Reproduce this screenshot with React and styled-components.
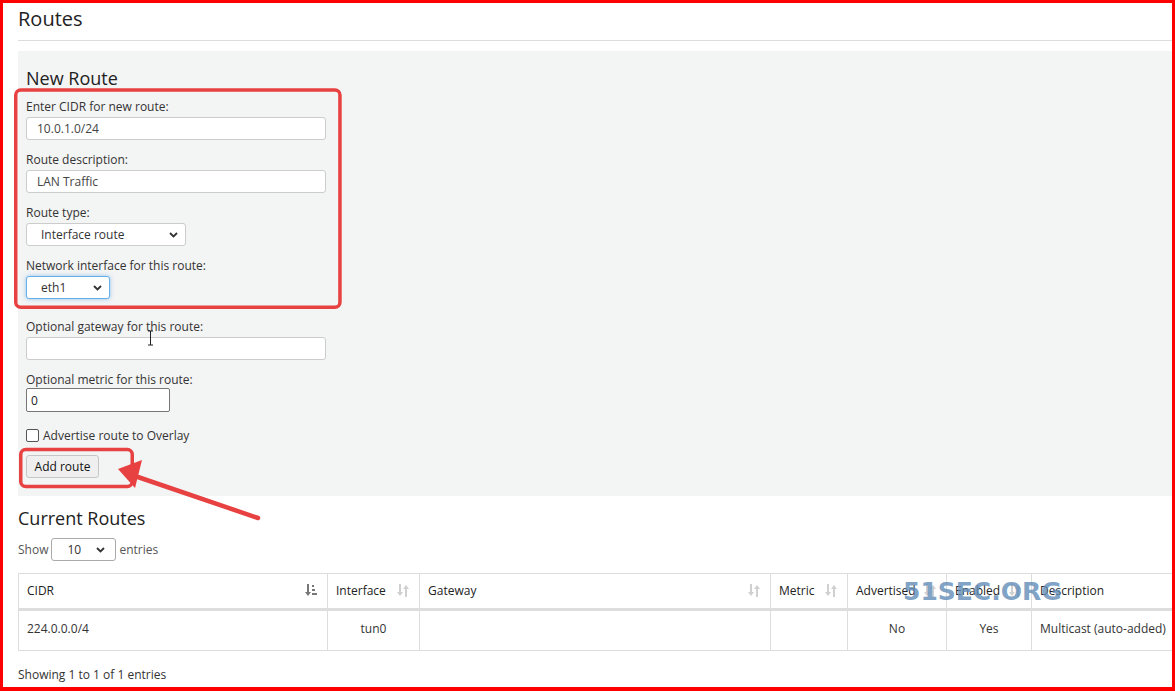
import React from 'react';
import styled, { createGlobalStyle } from 'styled-components';

const Global = createGlobalStyle`
  html, body { margin: 0; padding: 0; background: #fff; }
  body {
    font-family: "Open Sans", "Noto Sans", sans-serif;
    font-size: 12px;
    color: #333;
  }
  * { box-sizing: border-box; }
`;

const Frame = styled.div`
  position: relative;
  width: 1175px;
  height: 691px;
  border: 3px solid #ff0000;
  border-bottom-width: 4px;
  overflow: hidden;
  background: #fff;
`;

const Page = styled.div`
  width: 1220px;
  padding-left: 15px;
`;

const Title = styled.h1`
  margin: 0;
  padding-top: 2px;
  font-size: 20px;
  line-height: 28px;
  font-weight: 400;
  color: #222;
`;

const Rule = styled.hr`
  margin: 7px 0 10px;
  border: 0;
  border-top: 1px solid #ddd;
`;

const Panel = styled.section`
  background: #f3f4f4;
  padding: 15px 8px 18px;
`;

const SectionTitle = styled.h3`
  margin: ${p => p.$mt || 0}px 0 ${p => p.$mb || 0}px;
  font-size: 18px;
  line-height: 24px;
  font-weight: 400;
  color: #222;
`;

const Group = styled.div`
  display: flex;
  flex-direction: column;
  align-items: flex-start;
  margin-bottom: ${p => p.$mb ?? 11}px;
`;

const Label = styled.label`
  line-height: 17px;
  margin-bottom: ${p => p.$mb ?? 2}px;
`;

const TextInput = styled.div`
  width: ${p => p.$w || 300}px;
  height: 23px;
  display: flex;
  align-items: center;
  padding: 0 10px;
  background: #fff;
  border: 1px solid #ccc;
  border-radius: 3px;
  color: #444;
`;

const PlainInput = styled.div`
  width: 144px;
  height: 24px;
  display: flex;
  align-items: center;
  padding: 0 4px;
  background: #fff;
  border: 1px solid #767676;
  border-radius: 2px;
  color: #222;
`;

const Select = styled.div`
  width: ${p => p.$w}px;
  height: 23px;
  display: flex;
  align-items: center;
  justify-content: space-between;
  padding: 0 ${p => p.$pr || 7}px 0 ${p => p.$pl || 14}px;
  background: #fff;
  border: 1px solid ${p => (p.$focus ? '#66afe9' : p.$border || '#ccc')};
  border-radius: 3px;
  box-shadow: ${p => (p.$focus ? '0 0 4px rgba(102,175,233,0.7)' : 'none')};
  color: #333;
`;

const CheckRow = styled.div`
  display: flex;
  align-items: center;
  gap: 4px;
  line-height: 17px;
  margin-bottom: 11px;
`;

const Box = styled.span`
  width: 13px;
  height: 13px;
  border: 1px solid #555;
  border-radius: 2px;
  background: #fff;
`;

const Button = styled.button`
  height: 23px;
  width: 73px;
  padding: 0;
  font: inherit;
  color: #111;
  background: #efefef;
  border: 1px solid #c6c6c6;
  border-radius: 3px;
`;

const LengthRow = styled.div`
  display: flex;
  align-items: center;
  gap: 3px;
  margin-top: 8px;
  color: #555;
`;

const Grid = styled.div`
  margin-top: 12px;
  display: grid;
  grid-template-columns: 309px 92px 351px 77px 99px 85px 180px;
  border-top: 1px solid #ddd;
  border-left: 1px solid #ddd;
  width: max-content;
`;

const Th = styled.div`
  height: 37px;
  display: flex;
  align-items: center;
  justify-content: space-between;
  padding: 1px 10px 2px 8px;
  border-right: 1px solid #ddd;
  border-bottom: 3px solid #ddd;
  font-weight: 500;
  color: #222;
  white-space: nowrap;
`;

const Td = styled.div`
  height: 40px;
  padding: 9px 8px 0;
  line-height: 18px;
  border-right: 1px solid #ddd;
  border-bottom: 1px solid #ddd;
  text-align: ${p => (p.$center ? 'center' : 'left')};
  white-space: nowrap;
  color: #333;
`;

const Info = styled.div`
  margin-top: 15px;
  line-height: 17px;
`;

const Overlay = styled.svg`
  position: absolute;
  left: -3px;
  top: -3px;
  width: 1175px;
  height: 691px;
  pointer-events: none;
`;

const Watermark = styled.div`
  position: absolute;
  left: 900px;
  top: 574px;
  font-family: "DejaVu Sans", sans-serif;
  font-weight: 700;
  font-size: 25px;
  color: rgba(100, 142, 184, 0.82);
  pointer-events: none;
`;

const Chevron = () => (
  <svg width="9" height="6" viewBox="0 0 9 6">
    <polyline points="1,1 4.5,4.5 8,1" fill="none" stroke="#333" strokeWidth="1.8" />
  </svg>
);

const SortBoth = () => (
  <svg width="12" height="13" viewBox="0 0 12 13">
    <g fill="#d0d0d0">
      <rect x="2" y="0" width="2" height="9" />
      <polygon points="0,8 6,8 3,12" />
      <rect x="8" y="4" width="2" height="9" />
      <polygon points="6,5 12,5 9,1" />
    </g>
  </svg>
);

const SortDown = () => (
  <svg width="12" height="13" viewBox="0 0 12 13">
    <g fill="#777">
      <rect x="2" y="0" width="2" height="9" />
      <polygon points="0,8 6,8 3,12" />
      <rect x="7" y="1" width="2" height="2" />
      <rect x="7" y="5" width="3" height="2" />
      <rect x="7" y="9" width="5" height="2" />
    </g>
  </svg>
);

const columns = [
  { name: 'CIDR', icon: <SortDown /> },
  { name: 'Interface', icon: <SortBoth /> },
  { name: 'Gateway', icon: <SortBoth /> },
  { name: 'Metric', icon: <SortBoth /> },
  { name: 'Advertised', icon: <SortBoth /> },
  { name: 'Enabled', icon: <SortBoth /> },
  { name: 'Description', icon: null },
];

const row = [
  { v: '224.0.0.0/4' },
  { v: 'tun0', c: true },
  { v: '' },
  { v: '' },
  { v: 'No', c: true },
  { v: 'Yes', c: true },
  { v: 'Multicast (auto-added)' },
];

export default function App() {
  return (
    <>
      <Global />
      <Frame>
        <Page>
          <Title>Routes</Title>
          <Rule />
          <Panel>
            <SectionTitle $mb={8}>New Route</SectionTitle>
            <Group>
              <Label>Enter CIDR for new route:</Label>
              <TextInput>10.0.1.0/24</TextInput>
            </Group>
            <Group>
              <Label>Route description:</Label>
              <TextInput>LAN Traffic</TextInput>
            </Group>
            <Group>
              <Label>Route type:</Label>
              <Select $w={160}>
                <span>Interface route</span>
                <Chevron />
              </Select>
            </Group>
            <Group $mb={19}>
              <Label>Network interface for this route:</Label>
              <Select $w={84} $focus>
                <span>eth1</span>
                <Chevron />
              </Select>
            </Group>
            <Group>
              <Label>Optional gateway for this route:</Label>
              <TextInput />
            </Group>
            <Group $mb={15}>
              <Label $mb={0}>Optional metric for this route:</Label>
              <PlainInput>0</PlainInput>
            </Group>
            <CheckRow>
              <Box />
              <span>Advertise route to Overlay</span>
            </CheckRow>
            <Button>Add route</Button>
          </Panel>
          <SectionTitle $mt={10}>Current Routes</SectionTitle>
          <LengthRow>
            <span>Show</span>
            <Select $w={65} $pl={15} $pr={10} $border="#aaa">
              <span>10</span>
              <Chevron />
            </Select>
            <span>entries</span>
          </LengthRow>
          <Grid>
            {columns.map(c => (
              <Th key={c.name}>
                <span>{c.name}</span>
                {c.icon}
              </Th>
            ))}
            {row.map((r, i) => (
              <Td key={i} $center={r.c}>{r.v}</Td>
            ))}
          </Grid>
          <Info>Showing 1 to 1 of 1 entries</Info>
        </Page>
        <Watermark>51SEC.ORG</Watermark>
        <Overlay viewBox="0 0 1175 691">
          <rect x="15.75" y="90" width="324.2" height="217.3" rx="5" fill="none" stroke="#e84141" strokeWidth="3.5" />
          <rect x="20.75" y="449.5" width="111.5" height="37" rx="5" fill="none" stroke="#e84141" strokeWidth="3.5" />
          <line x1="258" y1="518" x2="132" y2="475" stroke="#e84141" strokeWidth="4.5" strokeLinecap="round" />
          <polygon points="118,469 142,460 135,488" fill="#e84141" />
          <g stroke="#222" strokeWidth="1" fill="none">
            <line x1="150.5" y1="331" x2="150.5" y2="345" />
            <line x1="148" y1="331" x2="153" y2="331" />
            <line x1="148" y1="345" x2="153" y2="345" />
          </g>
        </Overlay>
      </Frame>
    </>
  );
}
